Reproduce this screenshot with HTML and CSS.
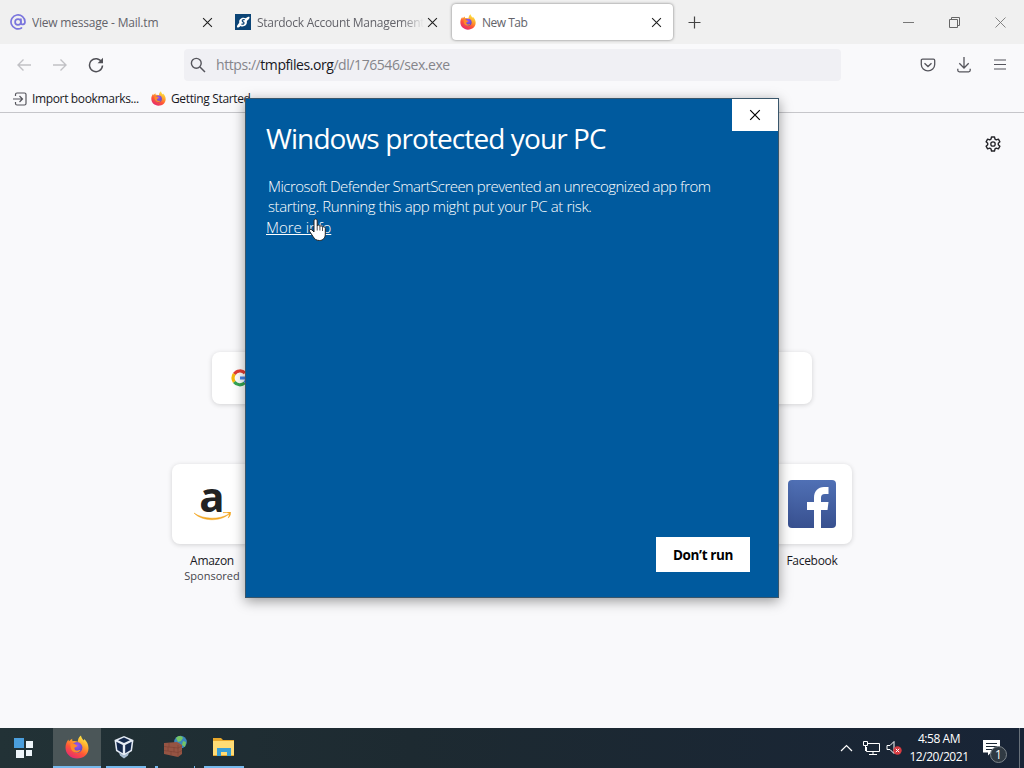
FILE: index.html
```html
<!DOCTYPE html>
<html lang="en">
<head>
<meta charset="UTF-8">
<meta name="viewport" content="width=device-width, initial-scale=1.0">
<title>New Tab</title>
<link rel="stylesheet" href="styles.css">
</head>
<body>

<!-- shared icons -->
<svg class="defs" width="0" height="0">
  <defs>
    <linearGradient id="fire" x1="0.85" y1="0.05" x2="0.3" y2="1">
      <stop offset="0" stop-color="#fff04a"/>
      <stop offset="0.35" stop-color="#ffa62b"/>
      <stop offset="0.65" stop-color="#ff5537"/>
      <stop offset="1" stop-color="#e32a72"/>
    </linearGradient>
    <radialGradient id="globe" cx="0.5" cy="0.3" r="0.8">
      <stop offset="0" stop-color="#a155f0"/>
      <stop offset="1" stop-color="#4a46b8"/>
    </radialGradient>
    <linearGradient id="fb" x1="0" y1="0" x2="0" y2="1">
      <stop offset="0" stop-color="#5070b5"/>
      <stop offset="1" stop-color="#38508f"/>
    </linearGradient>
    <symbol id="firefox" viewBox="0 0 24 24">
      <path fill="url(#fire)" d="M16 .5c.2 2.300 1.600 3.500 2.800 5.100l.5-1.500c2.500 2.400 4.200 5.500 4.200 9.100C23.500 19.300 18.400 23.500 12 23.500S.5 18.800.5 12.500c0-3.500 1.300-6 3-8l.4 2.100C5 5.200 6.200 4.200 7.300 3.700c-.3 1 0 1.900.5 2.500 1.700-.4 3.500 0 5 .6 0-2.600 1-4.900 3.200-6.300z"/>
      <circle cx="12" cy="12.500" r="5.400" fill="url(#globe)"/>
      <path fill="#ff8a2a" d="M5.500 8.500c2 .2 3.500 0 4.500.7 1.200.8 2 1.300 2.600 1.300-.5 1.400-2.300 1.600-3.100 2.200-.4 1.500.8 2.900 2.500 2.900 1.600 0 2.500-.8 3.600-.5-1 1.900-3 2.800-5 2.500-3.400-.6-5.500-3.200-5.100-9.100z"/>
    </symbol>
    <symbol id="cross" viewBox="0 0 10 10">
      <path d="M1 1l8 8M9 1l-8 8" fill="none" stroke="currentColor" stroke-width="1"/>
    </symbol>
  </defs>
</svg>

<div class="screen">
  <div class="tabs">
    <div class="tab">
      <svg class="favicon" viewBox="0 0 16 16"><g fill="none" stroke="#7a75dd" stroke-width="1.700" stroke-linecap="round"><circle cx="8" cy="8" r="2.900"/><path d="M10.900 5v3.700c0 2.600 4.100 2.300 4.100-.7A7 7 0 1 0 11.500 14"/></g></svg>
      <span class="tab-title t-mail">View message - Mail.tm</span>
      <svg class="tab-close"><use href="#cross"/></svg>
    </div>
    <div class="tab">
      <svg class="favicon" viewBox="0 0 16 16"><rect width="16" height="16" fill="#0b4476"/><path d="M2.300 13.500C.8 11.500 5 9 4.200 8 4 4.500 8 2.800 10.500 4.300c1.800-1.300 3.800-2 4-1 .4 1.700-3 3.500-2.600 4.500.3 3.800-3.900 5.700-6.400 4.100-1.300 1.200-2.600 2-3.200 1.600z" fill="#fff"/><path d="M9.800 5.700C7.500 5 6.400 7 8.100 7.900c1.900.9.600 2.900-1.700 2.100" fill="none" stroke="#0b4476" stroke-width="1.200"/></svg>
      <span class="tab-title fade t-stardock">Stardock Account Management</span>
      <svg class="tab-close"><use href="#cross"/></svg>
    </div>
    <div class="tab active">
      <svg class="favicon"><use href="#firefox"/></svg>
      <span class="tab-title t-new">New Tab</span>
      <svg class="tab-close"><use href="#cross"/></svg>
    </div>
    <svg class="new-tab" viewBox="0 0 13 13"><path d="M6.500.5v12M.5 6.500h12" stroke="#444" stroke-width="1.200"/></svg>
    <div class="window-buttons">
      <svg width="11" height="11"><path d="M0 5.500h11" stroke="#777"/></svg>
      <svg width="11" height="11"><path d="M.5 2.500h8v8h-8zM2.500 2.500v-2h8v8h-2" fill="none" stroke="#666"/></svg>
      <svg width="11" height="11"><path d="M.5.5l10 10M10.500.5l-10 10" stroke="#777" stroke-width=".9"/></svg>
    </div>
  </div>

  <div class="toolbar">
    <div class="nav">
      <svg width="16" height="16" viewBox="0 0 16 16"><path d="M15 8H2M7.500 2.500L2 8l5.500 5.500" fill="none" stroke="#c1c1c5" stroke-width="1.400"/></svg>
      <svg width="16" height="16" viewBox="0 0 16 16"><path d="M1 8h13M8.500 2.500L14 8l-5.500 5.500" fill="none" stroke="#c1c1c5" stroke-width="1.400"/></svg>
      <svg width="16" height="16" viewBox="0 0 16 16"><path d="M13.700 5A6.500 6.500 0 1 0 14.500 8.500" fill="none" stroke="#505056" stroke-width="1.500"/><path d="M15 .8v5.400H9.600z" fill="#505056"/></svg>
    </div>
    <div class="url-bar">
      <svg width="16" height="16" viewBox="0 0 16 16"><circle cx="6.300" cy="6.300" r="4.900" fill="none" stroke="#55555c" stroke-width="1.400"/><path d="M10 10l5 5" stroke="#55555c" stroke-width="1.500"/></svg>
      <span class="url">https://<b>tmpfiles.org</b>/dl/176546/sex.exe</span>
    </div>
    <div class="tools">
      <svg width="16" height="16" viewBox="0 0 16 16"><path d="M2.500 2.200h11q1.200 0 1.200 1.200V7.500a6.700 6.300 0 0 1-13.400 0V3.400q0-1.200 1.200-1.200zM4.500 6.200L8 9.500l3.500-3.300" fill="none" stroke="#55555c" stroke-width="1.300"/></svg>
      <svg width="16" height="16" viewBox="0 0 16 16"><path d="M8 0v11M3.300 6.300L8 11l4.700-4.700M1.800 11.800v1.500q0 1.500 1.500 1.500h9.400q1.500 0 1.500-1.500v-1.500" fill="none" stroke="#55555c" stroke-width="1.300"/></svg>
      <svg width="16" height="16" viewBox="0 0 16 16"><path d="M2 3h12M2 7.500h12M2 12h12" stroke="#55555c" stroke-width="1.200"/></svg>
    </div>
  </div>

  <div class="bookmarks">
    <svg width="16" height="16" viewBox="0 0 16 16"><path d="M3.500 5V3.500q0-1.500 1.500-1.500h7.500Q14 2 14 3.500v9q0 1.500-1.500 1.500H5q-1.500 0-1.500-1.500V11M1 8h9.500M7.500 5l3 3-3 3" fill="none" stroke="#55555c" stroke-width="1.200"/></svg>
    <span class="b-import">Import bookmarks...</span>
    <svg class="b-icon" width="15" height="15"><use href="#firefox"/></svg>
    <span class="b-start">Getting Started</span>
  </div>

  <div class="page">
    <svg class="gear" width="16" height="16" viewBox="0 0 16 16"><path d="M6.500 1h3l.5 2.100 1.300.8 2.100-.7 1.500 2.600L13.300 7.300v1.400l1.600 1.500-1.500 2.600-2.100-.7-1.300.8-.5 2.100h-3L6 12.900l-1.300-.8-2.100.7-1.500-2.600 1.600-1.500V7.300L1.100 5.800l1.500-2.600 2.100.7L6 3.100z" fill="none" stroke="#242429" stroke-width="1.400" stroke-linejoin="round"/><circle cx="8" cy="8" r="2.200" fill="none" stroke="#242429" stroke-width="1.300"/></svg>
    <div class="search">
      <svg width="18" height="18" viewBox="0 0 18 18" fill="none" stroke-width="3.200"><path d="M3.300 5A7 7 0 0 1 14 4" stroke="#e33e33"/><path d="M3.300 5a7.300 7.300 0 0 0 0 8" stroke="#f5b90c"/><path d="M3.300 13a7 7 0 0 0 10.400.9" stroke="#35a653"/><path d="M13.700 13.900A6.500 6.500 0 0 0 15.800 9H9" stroke="#4182ed"/></svg>
    </div>
    <div class="sites">
      <div class="site">
        <div class="tile amazon">
          <span class="amazon-a">a</span>
          <svg width="38" height="9" viewBox="4 33 38 9"><path d="M5 34c9 6.500 25 7 35 1-9 8-27 7.500-35-1zM34 33.700c3-1.500 6-1.700 7.500-.8.500 2-.6 4.600-2.300 6.200 1-2.500 1.300-4 .7-4.800-1.200-.8-3.500-.8-5.900-.6z" fill="#f2a51f" stroke="#f2a51f" stroke-width=".5"/></svg>
        </div>
        <span class="s-name">Amazon</span>
        <small>Sponsored</small>
      </div>
      <div class="site">
        <div class="tile">
          <svg width="48" height="48" viewBox="0 0 48 48"><rect width="48" height="48" rx="4" fill="url(#fb)"/><path d="M26 48V30h-7v-8h7v-4c0-7 4-11 10-11h4.500v7H37c-3 0-4 1.500-4 4v4h7.500l-1 8H33v18z" fill="#fff"/></svg>
        </div>
        <span class="s-name">Facebook</span>
      </div>
    </div>
  </div>

  <div class="taskbar">
    <div class="task start">
      <svg width="20" height="20" viewBox="0 0 20 20"><path d="M0 0h10v10H0z" fill="#4b9fdd"/><path d="M12 3h7v7h-7zM2 12h8v8H2zM12 12h6v6h-6z" fill="#edf5fa"/></svg>
    </div>
    <div class="task current"><svg width="24" height="24"><use href="#firefox"/></svg></div>
    <div class="task open vbox">
      <svg width="24" height="24" viewBox="0 0 24 24"><path d="M12 1l9.500 4-1.500 11-8 5-8-5L2.500 5z" fill="#e4ebf5"/><path d="M12 2.600l6 2.600-6 2.900-6-2.900zM4.300 6.700l6.500 3.200v8.300l-5.400-3.300zM19.700 6.700l-6.500 3.200v8.300l5.400-3.300z" fill="#14294d"/><path d="M7 17.500l5 3 5-3-1 3-4 3-4-3z" fill="#a8bdd3"/></svg>
    </div>
    <div class="task partial">
      <svg width="24" height="24" viewBox="0 0 24 24"><circle cx="17.500" cy="7" r="6.300" fill="#3d86bd"/><path d="M13 3c3-3 6-2 7 0l-2 3-3 1zM20 6l3 1-1 5-3-2z" fill="#75c565"/><path d="M1 8l13-1 5 3v9l-4 3-14-3z" fill="#955443"/><path d="M1 11.500l14 1.500 4-2M1 15.500l14 2 4-2M15 10v12M6 8v4M11 12v5M5 12v4M8 16v4" fill="none" stroke="#7a4034" stroke-width=".6"/></svg>
    </div>
    <div class="task open">
      <svg width="24" height="24" viewBox="0 0 24 24"><path d="M1 3h8l2 2h11v16H1z" fill="#e9a82c"/><path d="M1 6h21v14H1z" fill="#ffdc75"/><path d="M5 21v-8h14v8h-4v-4H9v4z" fill="#3a9fd6"/></svg>
    </div>
    <div class="tray">
      <svg width="13" height="8"><path d="M1 7l5.500-5.500L12 7" fill="none" stroke="#fff" stroke-width="1.200"/></svg>
      <svg class="net" width="17" height="15"><path d="M5 2.500h11.500v8H3.500V6M10 10.500v3M6 13.500h8" fill="none" stroke="#fff"/><path d="M.5.500h4v4h-4zM2.500 5v5" fill="none" stroke="#fff"/></svg>
      <svg class="vol" width="17" height="16"><path d="M1 5.500h3l4-4v12l-4-4H1z" fill="none" stroke="#fff"/><circle cx="11.500" cy="10.500" r="4.200" fill="#d83b41"/><path d="M9.800 8.800l3.400 3.400M13.200 8.800l-3.400 3.400" stroke="#fff"/></svg>
      <div class="clock"><span class="time">4:58 AM</span><span class="date">12/20/2021</span></div>
      <div class="notes">
        <svg width="17" height="17"><path d="M0 1h17v12.500H8l-3 3v-3H0z" fill="#fff"/><path d="M3 4.500h11M3 7.500h11M3 10.500h7" stroke="#1b2734"/></svg>
        <span class="badge">1</span>
      </div>
    </div>
  </div>

  <div class="dialog">
    <button class="dialog-close"><svg width="12" height="12"><use href="#cross"/></svg></button>
    <h1>Windows protected your PC</h1>
    <p><span class="p1">Microsoft Defender SmartScreen prevented an unrecognized app from</span><br><span class="p2">starting. Running this app might put your PC at risk.</span></p>
    <a class="more">More info</a>
    <button class="dont-run">Don’t run</button>
  </div>

  <svg class="cursor" width="19" height="24" viewBox="0 0 19 24"><path d="M6 14V3C6 .4 9.200.4 9.200 3V8c.3-1.300 2.500-1.200 2.700.5.600-1.200 2.500-.8 2.600.8.800-1 2.800-.5 2.800 1.200v5.500c0 3.800-2.200 6.500-5.800 6.500-3.300 0-5-1.500-6.500-4l-3.300-5c-1-1.700 1-3 2.200-1.600z" fill="#fff" stroke="#222" stroke-width="1"/><path d="M9.200 8v4.500M11.900 8.500v4M14.500 9.500v3.500" stroke="#222" stroke-width=".8"/></svg>
</div>

</body>
</html>
```
FILE: styles.css
```css
* {
  box-sizing: border-box;
}

body {
  margin: 0;
  font-family: "Open Sans", "Noto Sans", sans-serif;
  font-size: 12px;
  color: #18181e;
  overflow: hidden;
}

svg {
  display: block;
  flex: none;
}

.defs {
  position: absolute;
}

.screen {
  position: relative;
  width: 1024px;
  height: 768px;
  display: flex;
  flex-direction: column;
  background: #f9f9fb;
}

/* tab strip */
.tabs {
  height: 44px;
  display: flex;
  align-items: center;
  background: #f0f0f0;
}

.tab {
  width: 225px;
  height: 36px;
  padding: 0 12px 0 10px;
  display: flex;
  align-items: center;
  color: #63636a;
}

.tab.active {
  width: 221px;
  margin-left: 2px;
  padding: 0 11px 0 8px;
  background: #fff;
  border-radius: 4px;
  box-shadow: 0 0 3px rgba(0, 0, 0, 0.5);
}

.favicon {
  width: 16px;
  height: 16px;
  margin-right: 6px;
}

.tab-title {
  flex: 1;
  white-space: nowrap;
  overflow: hidden;
}

.t-mail {
  letter-spacing: -0.2px;
}

.t-stardock {
  letter-spacing: -0.28px;
}

.t-new {
  letter-spacing: -0.5px;
}

.fade {
  -webkit-mask-image: linear-gradient(to right, #000 86%, transparent);
  mask-image: linear-gradient(to right, #000 86%, transparent);
}

.tab-close {
  width: 11px;
  height: 11px;
  margin-left: 3px;
  color: #222;
}

.new-tab {
  width: 13px;
  height: 13px;
  margin-left: 15px;
}

.window-buttons {
  margin-left: auto;
  padding-right: 18px;
  display: flex;
  gap: 35px;
}

/* toolbar */
.toolbar {
  height: 41px;
  display: flex;
  align-items: center;
  padding: 0 16px;
}

.nav {
  width: 168px;
  display: flex;
  gap: 20px;
}

.url-bar {
  width: 657px;
  height: 32px;
  padding-left: 6px;
  display: flex;
  align-items: center;
  gap: 10px;
  background: #f0f0f4;
  border-radius: 4px;
}

.url {
  font-size: 14px;
  letter-spacing: -0.43px;
  color: #85858b;
}

.url b {
  font-weight: normal;
  color: #18181e;
}

.tools {
  margin-left: auto;
  display: flex;
  gap: 20px;
}

/* bookmarks */
.bookmarks {
  height: 28px;
  padding-left: 12px;
  display: flex;
  align-items: center;
  white-space: nowrap;
  letter-spacing: -0.35px;
  border-bottom: 1px solid #c6c6ca;
}

.b-import {
  width: 123px;
  padding-left: 4px;
}

.b-start {
  padding-left: 5px;
}

/* new tab page */
.page {
  flex: 1;
  display: flex;
  flex-direction: column;
  align-items: center;
}

.gear {
  align-self: flex-end;
  margin: 23px 23px 0 0;
}

.search {
  width: 600px;
  height: 52px;
  margin-top: 200px;
  padding-left: 19px;
  display: flex;
  align-items: center;
  background: #fff;
  border-radius: 8px;
  box-shadow: 0 1px 5px rgba(0, 0, 0, 0.16);
}

.sites {
  width: 720px;
  margin-top: 60px;
  display: flex;
  justify-content: space-between;
}

.site {
  width: 120px;
  display: flex;
  flex-direction: column;
  align-items: center;
}

.tile {
  width: 80px;
  height: 80px;
  display: flex;
  align-items: center;
  justify-content: center;
  background: #fff;
  border-radius: 8px;
  box-shadow: 0 1px 5px rgba(0, 0, 0, 0.16);
}

.amazon {
  flex-direction: column;
  justify-content: flex-start;
  padding-top: 6px;
}

.amazon-a {
  height: 42px;
  font-size: 42px;
  font-weight: 700;
  line-height: 52px;
  color: #222;
}

.s-name {
  margin-top: 9px;
  line-height: 16px;
  letter-spacing: -0.3px;
}

.site small {
  font-size: 11px;
  line-height: 14px;
  color: #45454b;
}

/* taskbar */
.taskbar {
  height: 40px;
  display: flex;
  background: linear-gradient(to right, #223236, #1d2a31 40%, #182436);
  color: #fff;
}

.task {
  display: flex;
  align-items: center;
  justify-content: center;
}

.start {
  width: 48px;
  margin-right: 5px;
}

.current {
  width: 48px;
  margin-right: 5px;
  background: #4b5658;
  border-bottom: 2px solid #76b9ed;
}

.open {
  width: 40px;
  margin-right: 9px;
  border-bottom: 2px solid #76b9ed;
}

.vbox {
  padding-right: 4px;
}

.partial {
  width: 40px;
  margin-right: 9px;
  border-bottom: 2px solid;
  border-image: linear-gradient(to right, #76b9ed 12%, transparent 12%, transparent 92%, #76b9ed 92%) 2;
}

.tray {
  margin-left: auto;
  width: 184px;
  display: flex;
  align-items: center;
}

.net {
  margin-left: 10px;
}

.vol {
  margin-left: 6px;
}

.clock {
  width: 72px;
  display: flex;
  flex-direction: column;
  align-items: center;
  line-height: 18px;
  letter-spacing: -0.45px;
  white-space: nowrap;
}

.notes {
  position: relative;
  width: 45px;
  height: 40px;
  padding: 11px 0 0 8px;
  border-right: 1px solid #68717a;
}

.badge {
  position: absolute;
  left: 15px;
  top: 18px;
  width: 17px;
  height: 17px;
  border: 1px solid #7d858b;
  border-radius: 50%;
  background: #303a43;
  font-size: 12px;
  line-height: 15px;
  text-align: center;
}

/* SmartScreen window */
.dialog {
  position: absolute;
  left: 245px;
  top: 98px;
  width: 534px;
  height: 500px;
  padding: 17px 20px;
  background: #005a9e;
  border: 1px solid #39566b;
  box-shadow: 0 3px 12px rgba(0, 0, 0, 0.4);
  color: #fff;
}

.dialog button {
  border: 0;
  padding: 0;
  background: #fff;
  color: #000;
  font-family: inherit;
}

.dialog-close {
  position: absolute;
  right: 0;
  top: 0;
  width: 46px;
  height: 32px;
  display: flex;
  align-items: center;
  justify-content: center;
}

.dialog h1 {
  margin: 0;
  font-size: 28px;
  font-weight: 400;
  line-height: 44px;
  letter-spacing: -0.9px;
  white-space: nowrap;
}

.dialog p {
  margin: 16px 0 0 2px;
  font-size: 15px;
  font-weight: 300;
  line-height: 20px;
  white-space: nowrap;
}

.p1 {
  letter-spacing: -0.53px;
}

.p2 {
  letter-spacing: -0.4px;
}

.more {
  display: inline-block;
  font-size: 15px;
  font-weight: 300;
  line-height: 22px;
  text-decoration: underline;
}

.dialog .dont-run {
  position: absolute;
  right: 28px;
  bottom: 25px;
  width: 94px;
  height: 35px;
  font-size: 13.5px;
  font-weight: 700;
  letter-spacing: -0.35px;
}

.cursor {
  position: absolute;
  left: 308px;
  top: 218px;
}
```
